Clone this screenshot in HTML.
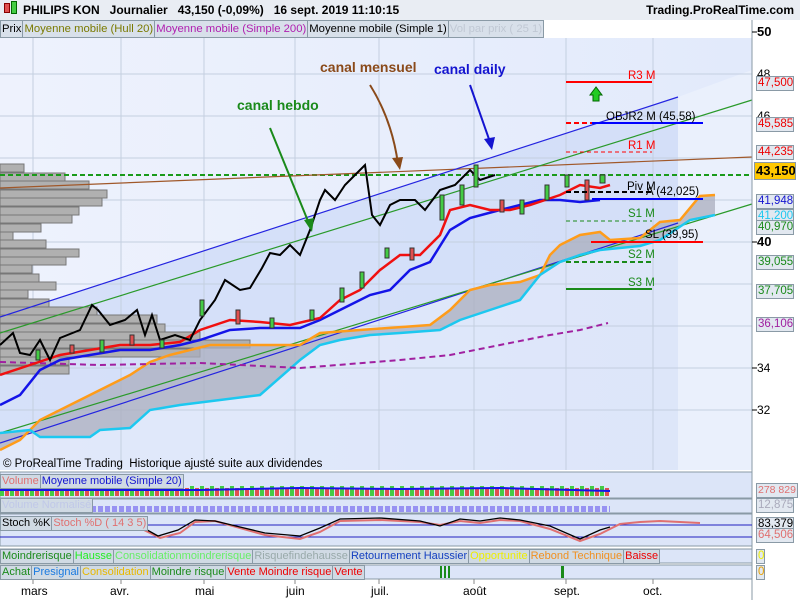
<!DOCTYPE html>
<html><head><meta charset="utf-8"><style>
*{margin:0;padding:0;box-sizing:border-box}
body{width:800px;height:600px;overflow:hidden;background:#fff;font-family:"Liberation Sans",sans-serif;position:relative}
.top{position:absolute;left:0;top:0;width:800px;height:20px;background:#e9edf3;font-size:12px;font-weight:bold;line-height:20px}
.leg{position:absolute;left:0;top:20px;height:17px;font-size:11.3px;line-height:16px;white-space:nowrap}
.leg span{display:inline-block;border:1px solid #8a9aa6;background:#d8e0ea;padding:0 1px;margin-right:-1px}
.lab{position:absolute;font-size:11.5px;white-space:nowrap;line-height:14px}
.box{position:absolute;left:756px;width:38px;height:15px;border:1px solid #8a9aa6;background:#e2e8f0;font-size:11.5px;line-height:13px;text-align:left;padding-left:1px;white-space:nowrap;overflow:hidden}
.tk{position:absolute;left:757px;font-size:12px}
.row{position:absolute;left:0;height:15px;font-size:11px;line-height:13px;white-space:nowrap}
.row span{display:inline-block;border:1px solid #8a9aa6;background:#d0dae4;padding:0 1px;margin-right:-1px;height:15px}
</style></head><body>
<div class="top"><span style="position:absolute;left:4px;top:3px;width:6px;height:10px;background:#e05050;border:1px solid #800"></span><span style="position:absolute;left:11px;top:1px;width:6px;height:13px;background:#4c4;border:1px solid #060"></span><span style="position:absolute;left:23px">PHILIPS KON &nbsp; Journalier &nbsp; 43,150 (-0,09%) &nbsp; 16 sept. 2019 11:10:15</span><span style="position:absolute;right:6px">Trading.ProRealTime.com</span></div>
<svg width="800" height="600" style="position:absolute;left:0;top:0">
<defs>
<linearGradient id="bg" x1="0" x2="1"><stop offset="0" stop-color="#eef2fd"/><stop offset="1" stop-color="#e2eafb"/></linearGradient>
<pattern id="vol" x="0" y="478" width="10" height="18" patternUnits="userSpaceOnUse"><rect x="0" y="8" width="4" height="10" fill="#4c4"/><rect x="5" y="10" width="4" height="8" fill="#e05050"/></pattern>
<pattern id="vn" x="0" y="503" width="7" height="9" patternUnits="userSpaceOnUse"><rect x="0" y="3" width="5" height="6" fill="#7a6ff0"/></pattern>
</defs>
<rect x="0" y="38" width="752" height="432" fill="url(#bg)"/>
<polygon points="0,317 678,97 678,223 0,443" fill="#cfdcf7" opacity=".8"/>
<polygon points="0,443 678,223 678,470 0,470" fill="#d8e2f8" opacity=".6"/>
<polygon points="678,97 752,70 752,470 678,470" fill="#eaf0fc"/>
<g stroke="#c4cfe0" stroke-width="1">
<line x1="33" y1="38" x2="33" y2="470"/><line x1="121" y1="38" x2="121" y2="470"/><line x1="204" y1="38" x2="204" y2="470"/><line x1="295" y1="38" x2="295" y2="470"/><line x1="379" y1="38" x2="379" y2="470"/><line x1="474" y1="38" x2="474" y2="470"/><line x1="566" y1="38" x2="566" y2="470"/><line x1="653" y1="38" x2="653" y2="470"/>
<line x1="0" y1="74" x2="752" y2="74"/><line x1="0" y1="116" x2="752" y2="116"/><line x1="0" y1="158" x2="752" y2="158"/><line x1="0" y1="200" x2="752" y2="200"/><line x1="0" y1="242" x2="752" y2="242"/><line x1="0" y1="284" x2="752" y2="284"/><line x1="0" y1="326" x2="752" y2="326"/><line x1="0" y1="368" x2="752" y2="368"/><line x1="0" y1="410" x2="752" y2="410"/>
</g>
<g fill="#b0b0b0" stroke="#777" stroke-width="1">
<rect x="0" y="164" width="24" height="8"/><rect x="0" y="173" width="65" height="8"/><rect x="0" y="181" width="89" height="8"/><rect x="0" y="190" width="107" height="8"/><rect x="0" y="198" width="102" height="8"/><rect x="0" y="207" width="79" height="8"/><rect x="0" y="215" width="72" height="8"/><rect x="0" y="224" width="41" height="8"/><rect x="0" y="232" width="13" height="8"/><rect x="0" y="240" width="46" height="8"/><rect x="0" y="249" width="79" height="8"/><rect x="0" y="257" width="66" height="8"/><rect x="0" y="265" width="32" height="8"/><rect x="0" y="274" width="39" height="8"/><rect x="0" y="282" width="56" height="8"/><rect x="0" y="290" width="28" height="8"/><rect x="0" y="299" width="49" height="8"/><rect x="0" y="307" width="97" height="8"/><rect x="0" y="315" width="157" height="8"/><rect x="0" y="324" width="165" height="8"/><rect x="0" y="332" width="200" height="8"/><rect x="0" y="340" width="250" height="8"/><rect x="0" y="349" width="200" height="8"/><rect x="0" y="357" width="69" height="8"/><rect x="0" y="366" width="69" height="8"/>
</g>
<polygon points="0,450 20,440 40,420 60,410 90,395 110,385 130,375 150,362 170,355 190,350 210,345 300,345 320,333 360,330 430,325 450,310 470,290 490,285 520,282 540,275 550,255 560,245 580,235 600,232 610,240 640,238 660,222 680,220 700,196 715,195 715,215 700,218 690,220 660,240 640,246 600,250 580,255 560,262 540,275 520,300 490,310 460,320 440,330 400,333 370,335 340,340 320,345 300,360 260,395 220,400 180,405 150,410 130,428 100,430 90,437 40,437 30,430 0,433" fill="#a9aebd" opacity=".75"/>
<line x1="0" y1="175" x2="752" y2="175" stroke="#1a9a1a" stroke-width="2" stroke-dasharray="5,3"/>
<line x1="0" y1="188" x2="752" y2="157" stroke="#a0582a" stroke-width="1.2"/>
<line x1="0" y1="317" x2="678" y2="97" stroke="#2424e0" stroke-width="1.2"/>
<line x1="0" y1="443" x2="678" y2="223" stroke="#2424e0" stroke-width="1.2"/>
<line x1="0" y1="333" x2="752" y2="100" stroke="#2a9a2a" stroke-width="1.2"/>
<line x1="0" y1="433" x2="752" y2="204" stroke="#2a9a2a" stroke-width="1.2"/>
<polyline fill="none" stroke="#ff9c1a" stroke-width="2.5" points="0,450 20,440 40,420 60,410 90,395 110,385 130,375 150,362 170,355 190,350 210,345 300,345 320,333 360,330 430,325 450,310 470,290 490,285 520,282 540,275 550,255 560,245 580,235 600,232 610,240 640,238 660,222 680,220 700,196 715,195"/>
<polyline fill="none" stroke="#1cc8f0" stroke-width="2.5" points="0,433 30,430 40,437 90,437 100,430 130,428 150,410 180,405 220,400 260,395 300,360 320,345 340,340 370,335 400,333 440,330 460,320 490,310 520,300 540,275 560,262 580,255 600,250 640,246 660,240 690,220 715,215"/>
<polyline fill="none" stroke="#a020a0" stroke-width="2" stroke-dasharray="6,4" points="0,362 100,365 200,363 300,368 400,360 450,355 500,345 550,335 580,330 608,323"/>
<polyline fill="none" stroke="#1414e8" stroke-width="2.5" points="0,405 20,395 40,370 60,360 90,355 120,350 150,350 180,345 200,340 230,330 260,328 300,328 320,320 350,305 370,295 390,290 410,270 430,262 450,230 470,218 500,210 520,205 540,200 560,200 580,202 600,200"/>
<polyline fill="none" stroke="#f01010" stroke-width="2.5" points="0,375 30,365 60,355 90,350 120,345 150,345 180,342 200,330 230,320 260,322 290,325 320,318 340,300 360,290 380,270 400,255 420,255 440,235 450,210 470,205 490,210 510,210 530,205 560,195 580,185 600,188 610,185"/>
<polyline fill="none" stroke="#000" stroke-width="2" points="0,345 13,333 20,353 30,355 40,340 50,360 60,338 80,330 92,305 98,310 110,325 125,320 137,310 145,335 152,315 160,340 175,335 190,340 200,320 215,300 225,280 240,290 250,288 262,268 270,253 280,255 290,245 300,255 310,230 320,200 325,190 335,200 345,185 355,175 365,165 372,215 380,225 390,205 400,200 415,200 425,210 440,190 455,185 470,170 480,180 495,175"/>
<g stroke="#333" stroke-width="1">
<rect x="36" y="350" width="4" height="10" fill="#4c4"/><rect x="70" y="345" width="4" height="8" fill="#e05050"/><rect x="100" y="340" width="4" height="12" fill="#4c4"/><rect x="130" y="335" width="4" height="10" fill="#e05050"/><rect x="160" y="340" width="4" height="8" fill="#4c4"/><rect x="200" y="300" width="4" height="16" fill="#4c4"/><rect x="236" y="310" width="4" height="14" fill="#e05050"/><rect x="270" y="318" width="4" height="10" fill="#4c4"/><rect x="310" y="310" width="4" height="10" fill="#4c4"/><rect x="340" y="288" width="4" height="14" fill="#4c4"/><rect x="360" y="272" width="4" height="16" fill="#4c4"/><rect x="385" y="248" width="4" height="10" fill="#4c4"/><rect x="410" y="248" width="4" height="12" fill="#e05050"/><rect x="440" y="195" width="4" height="25" fill="#4c4"/><rect x="460" y="185" width="4" height="20" fill="#4c4"/><rect x="474" y="165" width="4" height="22" fill="#4c4"/><rect x="500" y="200" width="4" height="12" fill="#e05050"/><rect x="520" y="200" width="4" height="14" fill="#4c4"/><rect x="545" y="185" width="4" height="15" fill="#4c4"/><rect x="565" y="175" width="4" height="12" fill="#4c4"/><rect x="585" y="180" width="4" height="20" fill="#e05050"/><rect x="600" y="175" width="5" height="8" fill="#4c4"/>
</g>
<line x1="566" y1="82" x2="652" y2="82" stroke="#f00" stroke-width="2"/>
<polygon points="596,87 590,95 593,95 593,101 599,101 599,95 602,95" fill="#2c2" stroke="#060"/>
<line x1="566" y1="123" x2="592" y2="123" stroke="#f00" stroke-width="2" stroke-dasharray="5,3"/>
<line x1="592" y1="123" x2="703" y2="123" stroke="#00f" stroke-width="2"/>
<line x1="566" y1="152" x2="652" y2="152" stroke="#f00" stroke-dasharray="4,3"/>
<line x1="566" y1="192" x2="652" y2="192" stroke="#000" stroke-width="2" stroke-dasharray="5,3"/>
<line x1="592" y1="199" x2="703" y2="199" stroke="#00f" stroke-width="2"/>
<line x1="566" y1="221" x2="652" y2="221" stroke="#1a8a1a" stroke-dasharray="4,3"/>
<line x1="591" y1="242" x2="703" y2="242" stroke="#f00" stroke-width="2"/>
<line x1="566" y1="262" x2="652" y2="262" stroke="#1a8a1a" stroke-width="2" stroke-dasharray="5,3"/>
<line x1="566" y1="289" x2="652" y2="289" stroke="#1a8a1a" stroke-width="2"/>
<line x1="270" y1="128" x2="310" y2="226" stroke="#1a8a1a" stroke-width="2"/><polygon points="312,232 304,220 314,218" fill="#1a8a1a"/>
<path d="M370 85 Q392 120 398 164" fill="none" stroke="#8a4a1a" stroke-width="2"/><polygon points="400,170 392,158 403,157" fill="#8a4a1a"/>
<line x1="470" y1="85" x2="490" y2="142" stroke="#1414d0" stroke-width="2"/><polygon points="492,150 484,139 495,137" fill="#1414d0"/>
<line x1="752" y1="20" x2="752" y2="600" stroke="#8a9aa6"/>
<rect x="0" y="472" width="752" height="26" fill="#dce5f8" stroke="#8a9aa6"/>
<rect x="0" y="478" width="610" height="18" fill="url(#vol)"/>
<polyline fill="none" stroke="#1414e8" stroke-width="2" points="0,490 200,490 300,488 400,489 500,488 610,491"/>
<rect x="0" y="499" width="752" height="14" fill="#dce5f8" stroke="#8a9aa6"/>
<rect x="92" y="503" width="518" height="9" fill="url(#vn)" opacity=".7"/>
<rect x="0" y="514" width="752" height="32" fill="#dce5f8" stroke="#8a9aa6"/>
<line x1="0" y1="525" x2="752" y2="525" stroke="#2020c0"/><line x1="0" y1="537" x2="752" y2="537" stroke="#2020c0"/>
<polyline fill="none" stroke="#e07070" stroke-width="2" points="140,528 160,538 180,533 195,522 215,521 240,528 265,535 300,539 320,532 340,521 380,520 420,522 440,525 460,521 480,523 500,520 520,521 550,529 580,541 600,534 620,524 640,522 660,521 680,522 700,523"/>
<polyline fill="none" stroke="#000" stroke-width="1.3" points="140,526 158,536 178,530 195,520 215,521 240,527 265,533 300,536 320,528 340,519 380,518 420,521 440,526 460,519 480,521 500,518 520,520 550,526 580,539 600,530 610,527"/>
<rect x="0" y="549" width="752" height="14" fill="#dce5f8" stroke="#8a9aa6"/>
<rect x="0" y="565" width="752" height="14" fill="#dce5f8" stroke="#8a9aa6"/>
<rect x="440" y="566" width="2" height="12" fill="#1a8a1a"/><rect x="444" y="566" width="2" height="12" fill="#1a8a1a"/><rect x="448" y="566" width="2" height="12" fill="#1a8a1a"/><rect x="561" y="566" width="3" height="12" fill="#1a8a1a"/>
<g stroke="#888"><line x1="33" y1="579" x2="33" y2="584"/><line x1="121" y1="579" x2="121" y2="584"/><line x1="204" y1="579" x2="204" y2="584"/><line x1="295" y1="579" x2="295" y2="584"/><line x1="379" y1="579" x2="379" y2="584"/><line x1="474" y1="579" x2="474" y2="584"/><line x1="566" y1="579" x2="566" y2="584"/><line x1="653" y1="579" x2="653" y2="584"/></g>
<g stroke="#000"><line x1="752" y1="32" x2="757" y2="32"/><line x1="752" y1="242" x2="757" y2="242"/><line x1="752" y1="368" x2="757" y2="368"/><line x1="752" y1="410" x2="757" y2="410"/></g>
</svg>
<div class="leg"><span style="color:#000">Prix</span><span style="color:#7a7a00">Moyenne mobile (Hull 20)</span><span style="color:#b020b0">Moyenne mobile (Simple 200)</span><span style="color:#000">Moyenne mobile (Simple 1)</span><span style="color:#c0c8d4">Vol par prix ( 25 1)</span></div>
<div class="lab" style="left:237px;top:98px;color:#1a8a1a;font-weight:bold;font-size:14px">canal hebdo</div>
<div class="lab" style="left:320px;top:60px;color:#8a4a1a;font-weight:bold;font-size:14px">canal mensuel</div>
<div class="lab" style="left:434px;top:62px;color:#1414d0;font-weight:bold;font-size:14px">canal daily</div>
<div class="lab" style="left:628px;top:69px;color:#f00">R3 M</div>
<div class="lab" style="left:606px;top:110px;color:#000">OBJR2 M (45,58)</div>
<div class="lab" style="left:628px;top:139px;color:#f00">R1 M</div>
<div class="lab" style="left:627px;top:180px;color:#000">Piv M</div>
<div class="lab" style="left:646px;top:185px;color:#000">A (42,025)</div>
<div class="lab" style="left:628px;top:207px;color:#1a8a1a">S1 M</div>
<div class="lab" style="left:645px;top:228px;color:#000">SL (39,95)</div>
<div class="lab" style="left:628px;top:248px;color:#1a8a1a">S2 M</div>
<div class="lab" style="left:628px;top:276px;color:#1a8a1a">S3 M</div>
<div class="lab" style="left:3px;top:457px;color:#000;font-size:11.5px">© ProRealTime Trading &nbsp;Historique ajusté suite aux dividendes</div>
<div class="tk" style="top:24px;font-weight:bold;font-size:13px">50</div>
<div class="tk" style="top:67px">48</div><div class="tk" style="top:109px">46</div>
<div class="tk" style="top:234px;font-weight:bold;font-size:13px">40</div>
<div class="tk" style="top:361px">34</div><div class="tk" style="top:403px">32</div>
<div class="box" style="top:76px;color:#e00">47,500</div>
<div class="box" style="top:117px;color:#e00">45,585</div>
<div class="box" style="top:145px;color:#e00">44,235</div>
<div class="box" style="top:162px;left:754px;width:42px;height:18px;background:#ffc800;font-weight:bold;font-size:13px;line-height:16px;color:#000">43,150</div>
<div class="box" style="top:194px;color:#1414d0">41,948</div>
<div class="box" style="top:209px;color:#1cc8f0">41,200</div>
<div class="box" style="top:220px;color:#1a8a1a">40,970</div>
<div class="box" style="top:255px;color:#1a8a1a">39,055</div>
<div class="box" style="top:284px;color:#1a8a1a">37,705</div>
<div class="box" style="top:317px;color:#a020a0">36,106</div>
<div class="box" style="top:483px;width:42px;font-size:10.5px;color:#e07070">278 829</div>
<div class="box" style="top:498px;color:#aab">12,875</div>
<div class="box" style="top:517px;color:#000">83,379</div>
<div class="box" style="top:528px;color:#e07070">64,506</div>
<div class="box" style="top:549px;width:9px;color:#ee0">0</div>
<div class="box" style="top:565px;width:9px;color:#e8a000">0</div>
<div class="row" style="top:474px"><span style="color:#e07070;background:#d0dae4">Volume</span><span style="color:#1414d0">Moyenne mobile (Simple 20)</span></div>
<div class="row" style="top:498px"><span style="color:#c0c8e8">Volume Normalisé</span></div>
<div class="row" style="top:516px"><span style="color:#000">Stoch %K</span><span style="color:#e07070">Stoch %D ( 14 3 5)</span></div>
<div class="row" style="top:549px"><span style="color:#1a8a1a">Moindrerisque</span><span style="color:#2e2">Hausse</span><span style="color:#6e6">Consolidationmoindrerisque</span><span style="color:#9aa">Risquefindehausse</span><span style="color:#1440c0">Retournement Haussier</span><span style="color:#ee0">Opportunite</span><span style="color:#f09020">Rebond Technique</span><span style="color:#e00">Baisse</span></div>
<div class="row" style="top:565px"><span style="color:#1a8a1a">Achat</span><span style="color:#1a7ae0">Presignal</span><span style="color:#e8b800">Consolidation</span><span style="color:#1a8a1a">Moindre risque</span><span style="color:#e00">Vente Moindre risque</span><span style="color:#e00">Vente</span></div>
<div class="lab" style="left:21px;top:584px;font-size:12px">mars</div>
<div class="lab" style="left:110px;top:584px;font-size:12px">avr.</div>
<div class="lab" style="left:195px;top:584px;font-size:12px">mai</div>
<div class="lab" style="left:286px;top:584px;font-size:12px">juin</div>
<div class="lab" style="left:371px;top:584px;font-size:12px">juil.</div>
<div class="lab" style="left:463px;top:584px;font-size:12px">août</div>
<div class="lab" style="left:554px;top:584px;font-size:12px">sept.</div>
<div class="lab" style="left:643px;top:584px;font-size:12px">oct.</div>
</body></html>
